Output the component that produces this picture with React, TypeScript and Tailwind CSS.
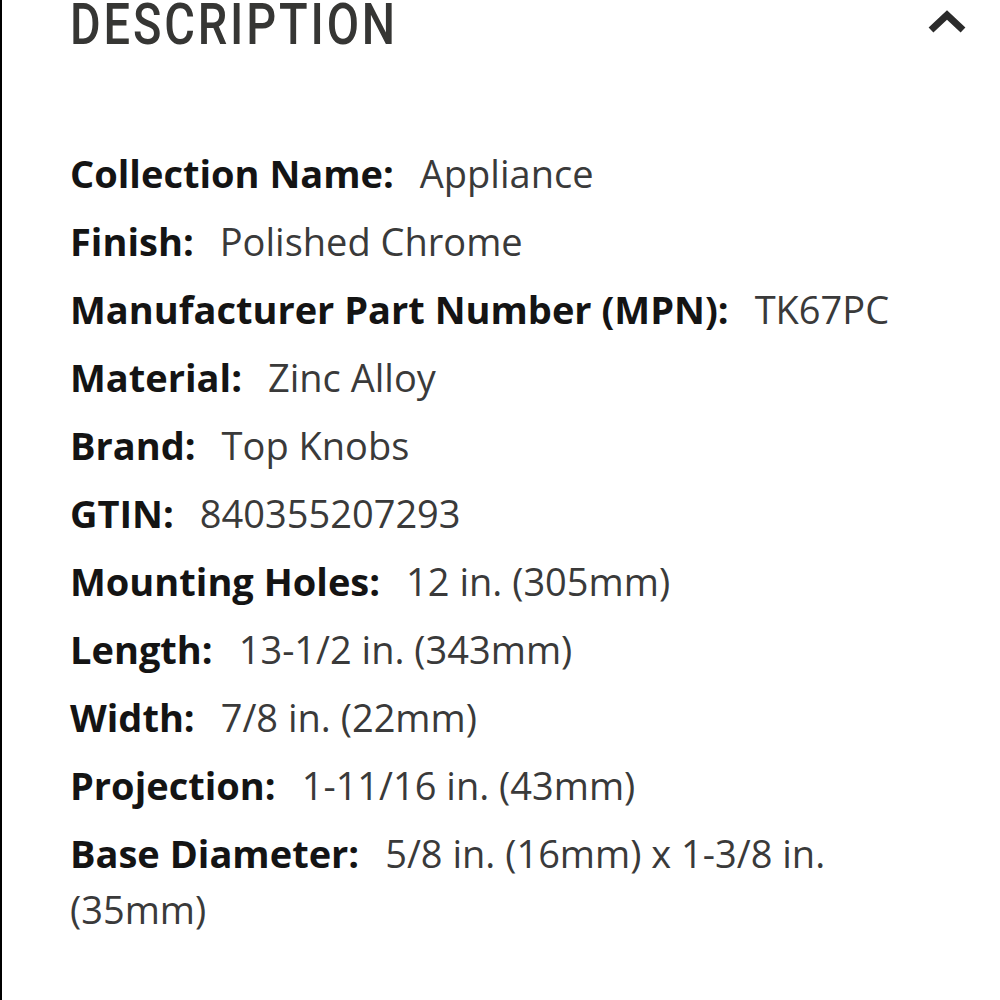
import React from "react";

type Spec = { label: string; value: string };

const specs: Spec[] = [
  { label: "Collection Name:", value: "Appliance" },
  { label: "Finish:", value: "Polished Chrome" },
  { label: "Manufacturer Part Number (MPN):", value: "TK67PC" },
  { label: "Material:", value: "Zinc Alloy" },
  { label: "Brand:", value: "Top Knobs" },
  { label: "GTIN:", value: "840355207293" },
  { label: "Mounting Holes:", value: "12 in. (305mm)" },
  { label: "Length:", value: "13-1/2 in. (343mm)" },
  { label: "Width:", value: "7/8 in. (22mm)" },
  { label: "Projection:", value: "1-11/16 in. (43mm)" },
  { label: "Base Diameter:", value: "5/8 in. (16mm) x 1-3/8 in. (35mm)" },
];

function ChevronUp() {
  return (
    <svg width="40" height="24" viewBox="0 0 40 24" className="mt-[10px]">
      <path d="M4 20 L20 5 L36 20" fill="none" stroke="#2b2b2b" strokeWidth="7" strokeLinejoin="miter" />
    </svg>
  );
}

export default function App() {
  return (
    <div className="min-h-screen bg-white border-l-2 border-black pl-[68px] pr-[33px] pb-10 font-['Open_Sans',sans-serif]">
      <div className="flex items-start justify-between">
        <h2 className="mt-[-5px] font-['Roboto',sans-serif] text-[58px] leading-[58px] font-medium tracking-[3.5px] text-[#363634] uppercase origin-left scale-x-[0.81]">
          Description
        </h2>
        <ChevronUp />
      </div>

      <div className="mt-[92px] flex flex-col gap-[12px]">
        {specs.map((s) => (
          <p key={s.label} className="text-[38px] leading-[56px] text-[#3a3a3a]">
            <span className="font-bold text-[#141414] mr-[26px]">{s.label}</span>
            <span>{s.value}</span>
          </p>
        ))}
      </div>
    </div>
  );
}
